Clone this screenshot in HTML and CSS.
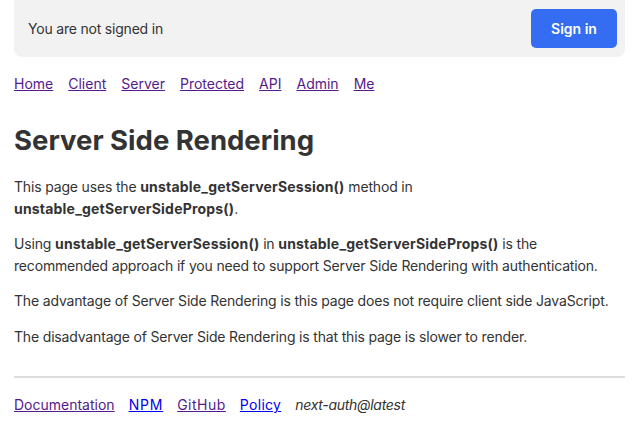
FILE: index.html
```html
<!DOCTYPE html>
<html>
<head>
<meta charset="utf-8">
<link rel="stylesheet" href="styles.css">
</head>
<body>
<div class="page">
  <header class="signin-bar">
    <span class="status">You are not signed in</span>
    <a class="btn" href="#">Sign in</a>
  </header>
  <nav class="nav">
    <a class="visited" href="#">Home</a>
    <a class="visited" href="#">Client</a>
    <a class="visited" href="#">Server</a>
    <a class="visited" href="#">Protected</a>
    <a class="visited" href="#">API</a>
    <a class="visited" href="#">Admin</a>
    <a class="visited" href="#">Me</a>
  </nav>
  <main class="content">
    <h1>Server Side Rendering</h1>
    <p>This page uses the <strong>unstable_getServerSession()</strong> method in <strong>unstable_getServerSideProps()</strong>.</p>
    <p>Using <strong>unstable_getServerSession()</strong> in <strong>unstable_getServerSideProps()</strong> is the recommended approach if you need to support Server Side Rendering with authentication.</p>
    <p>The advantage of Server Side Rendering is this page does not require client side JavaScript.</p>
    <p>The disadvantage of Server Side Rendering is that this page is slower to render.</p>
  </main>
  <footer class="footer">
    <hr class="rule">
    <div class="footer-links">
      <a class="visited" href="#">Documentation</a>
      <a class="link npm" href="#">NPM</a>
      <a class="visited github" href="#">GitHub</a>
      <a class="link policy" href="#">Policy</a>
      <em class="version">next-auth@latest</em>
    </div>
  </footer>
</div>
</body>
</html>
```
FILE: styles.css
```css
html, body {
  margin: 0;
  padding: 0;
  background: #fff;
}
body {
  font-family: Inter, "Liberation Sans", sans-serif;
  font-size: 14px;
  color: #333;
}
.page {
  padding: 0 19px 0 14px;
}
.signin-bar {
  display: flex;
  align-items: center;
  justify-content: space-between;
  height: 57px;
  box-sizing: border-box;
  padding: 0 8px 0 14px;
  background: #f2f2f2;
  border-radius: 0 0 8px 8px;
}
.status {
  font-size: 14px;
  letter-spacing: -0.2px;
}
.btn {
  display: flex;
  align-items: center;
  justify-content: center;
  width: 86px;
  height: 39px;
  background: #346df1;
  color: #fff;
  font-weight: 600;
  font-size: 14px;
  text-decoration: none;
  border-radius: 5px;
}
.nav {
  display: flex;
  gap: 15px;
  margin-top: 17px;
  line-height: 20px;
}
.visited {
  color: #551a8b;
}
.link {
  color: #0000ee;
}
.content h1 {
  font-size: 27.5px;
  font-weight: 700;
  margin: 30px 0 20px;
  line-height: 32px;
}
.content p {
  margin: 14px 0;
  line-height: 21.5px;
  letter-spacing: -0.17px;
}
.content strong {
  letter-spacing: 0.2px;
}
.footer {
  margin-top: 29px;
}
.rule {
  border: 0;
  height: 2px;
  background: #ddd;
  margin: 0;
}
.footer-links {
  display: flex;
  gap: 14px;
  margin-top: 17px;
  line-height: 20px;
}
.npm {
  letter-spacing: 0.8px;
}
.github {
  letter-spacing: 0.5px;
}
.policy {
  letter-spacing: 0.3px;
}
.version {
  font-style: italic;
  letter-spacing: -0.3px;
}
```
